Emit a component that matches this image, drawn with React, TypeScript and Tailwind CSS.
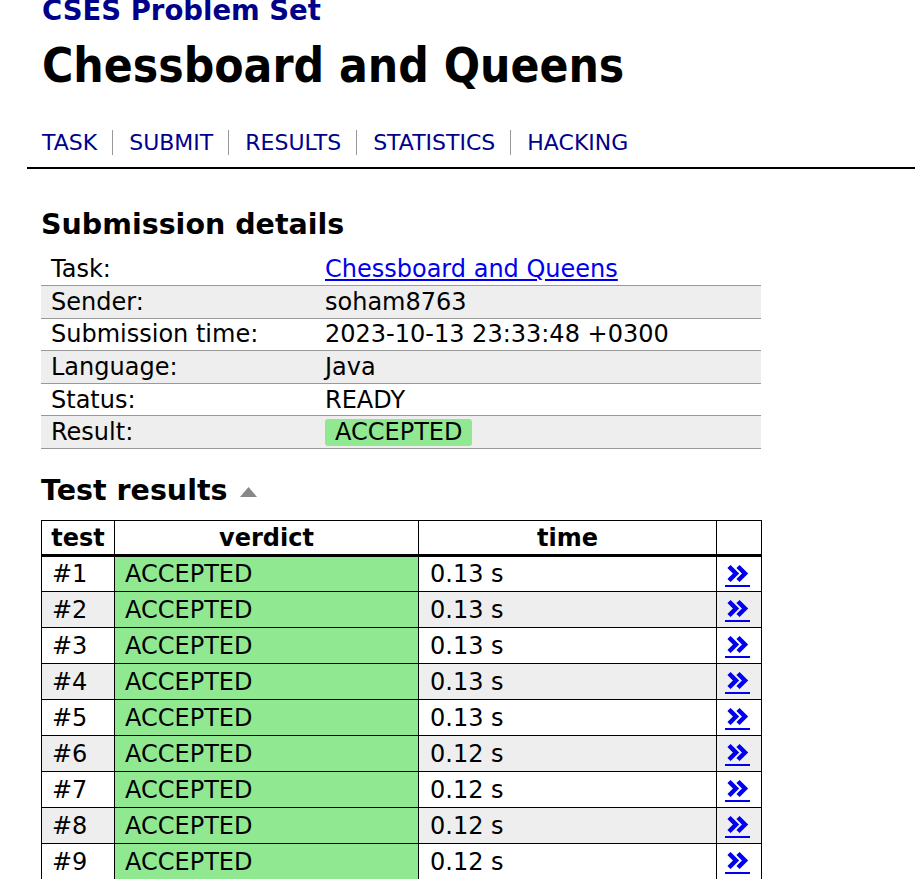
import React from 'react';

const tests = [
  { id: 1, time: '0.13 s' },
  { id: 2, time: '0.13 s' },
  { id: 3, time: '0.13 s' },
  { id: 4, time: '0.13 s' },
  { id: 5, time: '0.13 s' },
  { id: 6, time: '0.12 s' },
  { id: 7, time: '0.12 s' },
  { id: 8, time: '0.12 s' },
  { id: 9, time: '0.12 s' },
];

const details: [string, React.ReactNode][] = [
  ['Task:', <a href="#" className="text-[#0000ee] underline">Chessboard and Queens</a>],
  ['Sender:', 'soham8763'],
  ['Submission time:', '2023-10-13 23:33:48 +0300'],
  ['Language:', 'Java'],
  ['Status:', 'READY'],
  ['Result:', <span className="inline-block bg-[#90e890] rounded-[3px] px-[10px] leading-[27px]">ACCEPTED</span>],
];

const nav = ['TASK', 'SUBMIT', 'RESULTS', 'STATISTICS', 'HACKING'];

function Chevrons() {
  return (
    <a href="#" className="inline-flex flex-col items-center align-middle">
      <svg width="24" height="19" viewBox="0 0 24 19">
        <polyline points="3,2.5 10,9.5 3,16.5" fill="none" stroke="#0000ee" strokeWidth="4.5" />
        <polyline points="12,2.5 19,9.5 12,16.5" fill="none" stroke="#0000ee" strokeWidth="4.5" />
      </svg>
      <span className="block w-[25px] h-[2px] bg-[#0000ee] mt-[2px]" />
    </a>
  );
}

export default function App() {
  return (
    <div className="min-h-screen bg-white text-black font-['DejaVu_Sans',sans-serif] overflow-hidden">
      <div className="pl-[42px]">
        <div className="h-[22px] overflow-hidden">
          <div className="text-[27.5px] font-bold text-[#00008b] leading-[28px] -mt-[4px]">CSES Problem Set</div>
        </div>
        <h1 className="text-[47.5px] font-bold leading-[48px] mt-[20px] font-['DejaVu_Sans_Condensed','DejaVu_Sans',sans-serif]">
          Chessboard and Queens
        </h1>
        <nav className="flex items-center mt-[40px] text-[22px] text-[#00008b] leading-[24px]">
          {nav.map((n, i) => (
            <React.Fragment key={n}>
              {i > 0 && <span className="w-px h-[25px] bg-[#999] ml-[15px] mr-[16px]" />}
              <a href="#">{n}</a>
            </React.Fragment>
          ))}
        </nav>
      </div>
      <div className="ml-[27px] mt-[12px] h-[2px] bg-black" />
      <div className="pl-[41px]">
        <h2 className="text-[28.5px] font-bold leading-[32px] mt-[40px]">Submission details</h2>
        <table className="w-[720px] mt-[12px] text-[24px] leading-[28px] border-collapse">
          <tbody>
            {details.map(([k, v], i) => (
              <tr key={i} className={`${i % 2 === 1 ? 'bg-[#eeeeee]' : 'bg-white'} border-b border-[#999]`}>
                <td className="w-[284px] pl-[10px] h-[32.6px] py-0">{k}</td>
                <td className="py-0">{v}</td>
              </tr>
            ))}
          </tbody>
        </table>
        <h2 className="text-[28.5px] font-bold leading-[32px] mt-[26px] flex items-center">
          Test results
          <svg width="17" height="10" viewBox="0 0 17 10" className="ml-[12px] mt-[2px]">
            <polygon points="8.5,0 17,10 0,10" fill="#888" />
          </svg>
        </h2>
        <table className="w-[721px] mt-[13px] text-[24px] leading-[28px] border-collapse">
          <thead>
            <tr className="border-b-[3px] border-black">
              <th className="border border-black w-[73px] h-[35px] py-0 font-bold">test</th>
              <th className="border border-black w-[304px] py-0 font-bold">verdict</th>
              <th className="border border-black w-[298px] py-0 font-bold">time</th>
              <th className="border border-black py-0" />
            </tr>
          </thead>
          <tbody>
            {tests.map((t, i) => (
              <tr key={t.id} className={i % 2 === 1 ? 'bg-[#eeeeee]' : 'bg-white'}>
                <td className="border border-black h-[36px] py-0 pl-[10px]">#{t.id}</td>
                <td className="border border-black py-0 pl-[10px] bg-[#90e890]">ACCEPTED</td>
                <td className="border border-black py-0 pl-[11px]">{t.time}</td>
                <td className="border border-black py-0 pl-[8px]"><Chevrons /></td>
              </tr>
            ))}
          </tbody>
        </table>
      </div>
    </div>
  );
}
